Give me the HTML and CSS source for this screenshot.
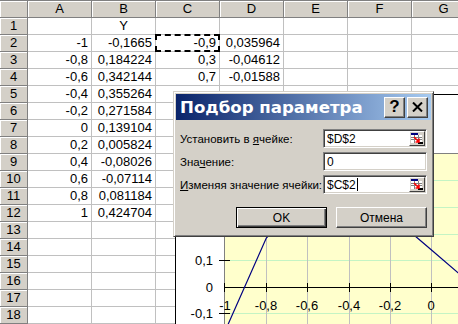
FILE: index.html
```html
<!DOCTYPE html>
<html lang="ru">
<head>
    <meta charset="UTF-8">
    <meta name="viewport" content="width=device-width, initial-scale=1.0">
    <title>Подбор параметра</title>
    <link rel="stylesheet" href="styles.css">
</head>
<body>
    <div class="sheet" id="sheet"></div>

    <svg class="chart" width="284" height="230" viewBox="0 0 284 230">
        <rect x="1.5" y="0.5" width="320" height="260" fill="#fff" stroke="#000"/>
        <rect x="50.5" y="59.5" width="260" height="200" fill="#ffffcc" stroke="#808080"/>
        <!-- gridlines -->
        <path d="M51 86.5H300M51 113.5H300M51 140.5H300M51 166.5H300M51 219.5H300" stroke="#c4f4c4"/>
        <path d="M92.5 60V230M133.5 60V230M175.5 60V230M216.5 60V230M257.5 60V230" stroke="#c0c0c0"/>
        <!-- axes -->
        <path d="M50.5 193.5H300" stroke="#000"/>
        <path d="M50.5 189V198M92.5 189V198M133.5 189V198M175.5 189V198M216.5 189V198M257.5 189V198" stroke="#000"/>
        <path d="M45 60.5H56M45 86.5H56M45 113.5H56M45 140.5H56M45 166.5H56M45 219.5H56" stroke="#000"/>
        <polyline fill="none" stroke="#000080" stroke-width="1.2"
            points="51,237.3 92.3,144 133.6,102 174.9,98.5 216.2,120.8 257.5,156 298.8,191.5"/>
        <text x="39" y="171" text-anchor="end">0,1</text>
        <text x="39" y="198" text-anchor="end">0</text>
        <text x="39" y="224" text-anchor="end">-0,1</text>
        <text x="51" y="216" text-anchor="middle">-1</text>
        <text x="92" y="216" text-anchor="middle">-0,8</text>
        <text x="133" y="216" text-anchor="middle">-0,6</text>
        <text x="175" y="216" text-anchor="middle">-0,4</text>
        <text x="216" y="216" text-anchor="middle">-0,2</text>
        <text x="257" y="216" text-anchor="middle">0</text>
    </svg>

    <div class="dialog">
        <div class="title-bar">
            <span class="title">Подбор параметра</span>
            <div class="title-buttons">
                <button class="tbtn">?</button>
                <button class="tbtn">
                    <svg width="11" height="10" viewBox="0 0 11 10">
                        <path d="M1 0.5L10 9.5M10 0.5L1 9.5" stroke="#000" stroke-width="2"/>
                    </svg>
                </button>
            </div>
        </div>
        <div class="dialog-body">
            <div class="fields">
                <label>Установить в <u>я</u>чейке:</label>
                <div class="field">
                    <span>$D$2</span>
                    <span class="ref-btn">
                        <svg width="14" height="13" viewBox="0 0 14 13">
                            <rect x="1" y="1" width="7" height="2" fill="#000080"/>
                            <rect x="1" y="3" width="11" height="8" fill="#fff"/>
                            <path d="M1 5.5H12M1 7.5H12M4.5 3V11M8.5 3V11" stroke="#808080"/>
                            <rect x="8" y="10" width="5" height="2" fill="#000"/>
                            <path d="M4 5L9 10M9 6.5V10H5.5" stroke="#f00" stroke-width="1.5" fill="none"/>
                        </svg>
                    </span>
                </div>
                <label>Зна<u>ч</u>ение:</label>
                <div class="field">
                    <span>0</span>
                </div>
                <label><u>И</u>зменяя значение ячейки:</label>
                <div class="field">
                    <span>$C$2</span><span class="caret"></span>
                    <span class="ref-btn">
                        <svg width="14" height="13" viewBox="0 0 14 13">
                            <rect x="1" y="1" width="7" height="2" fill="#000080"/>
                            <rect x="1" y="3" width="11" height="8" fill="#fff"/>
                            <path d="M1 5.5H12M1 7.5H12M4.5 3V11M8.5 3V11" stroke="#808080"/>
                            <rect x="8" y="10" width="5" height="2" fill="#000"/>
                            <path d="M4 5L9 10M9 6.5V10H5.5" stroke="#f00" stroke-width="1.5" fill="none"/>
                        </svg>
                    </span>
                </div>
            </div>
            <div class="buttons">
                <button class="btn default">OK</button>
                <button class="btn">Отмена</button>
            </div>
        </div>
    </div>

    <script>
        const sheet = document.getElementById("sheet");
        const cols = ["A", "B", "C", "D", "E", "F", "G"];
        const rows = [
            ["", "Y"],
            ["-1", "-0,1665", "-0,9", "0,035964"],
            ["-0,8", "0,184224", "0,3", "-0,04612"],
            ["-0,6", "0,342144", "0,7", "-0,01588"],
            ["-0,4", "0,355264"],
            ["-0,2", "0,271584"],
            ["0", "0,139104"],
            ["0,2", "0,005824"],
            ["0,4", "-0,08026"],
            ["0,6", "-0,07114"],
            ["0,8", "0,081184"],
            ["1", "0,424704"]
        ];

        function addCell(text, className) {
            const cell = document.createElement("div");
            cell.className = className;
            cell.textContent = text;
            sheet.appendChild(cell);
            return cell;
        }

        addCell("", "cell head col-head");
        cols.forEach(function(c) {
            addCell(c, "cell head col-head");
        });

        for (let r = 1; r <= 18; r++) {
            addCell(r, "cell head");
            const values = rows[r - 1] || [];
            cols.forEach(function(c, i) {
                const cell = addCell(values[i] || "", "cell");
                if (r === 1) cell.classList.add("center");
                if (r === 2 && c === "C") cell.classList.add("copied");
            });
        }
    </script>
</body>
</html>
```

FILE: styles.css
```css
body {
    margin: 0;
    width: 458px;
    height: 324px;
    overflow: hidden;
    position: relative;
    background-color: #fff;
    font-family: "Liberation Sans", Arial, sans-serif;
}

/* spreadsheet */
.sheet {
    display: grid;
    grid-template-columns: 28px repeat(7, 64px);
    grid-template-rows: 18px;
    grid-auto-rows: 17px;
    font-size: 13px;
}
.cell {
    box-sizing: border-box;
    border-right: 1px solid #c0c0c0;
    border-bottom: 1px solid #c0c0c0;
    padding: 0 3px;
    line-height: 16px;
    text-align: right;
    white-space: nowrap;
    overflow: hidden;
}
.cell.center {
    text-align: center;
}
.head {
    background-color: #d4d0c8;
    border-color: #808080;
    box-shadow: inset 1px 1px #fff;
    text-align: center;
    padding: 0;
}
.col-head {
    border-top: 1px solid #808080;
}
.copied {
    position: relative;
    overflow: visible;
}
.copied::after {
    content: "";
    position: absolute;
    left: -1px;
    top: -1px;
    right: -1px;
    bottom: -1px;
    border: 2px dashed #000;
}

/* chart object */
.chart {
    position: absolute;
    left: 174px;
    top: 94px;
}
.chart text {
    font-family: "Liberation Sans", Arial, sans-serif;
    font-size: 13px;
    fill: #000;
}

/* goal seek dialog */
.dialog {
    position: absolute;
    left: 173px;
    top: 91px;
    width: 261px;
    box-sizing: border-box;
    padding: 2px;
    background-color: #d4d0c8;
    border: 1px solid;
    border-color: #d4d0c8 #404040 #404040 #d4d0c8;
    box-shadow: inset 1px 1px #fff, inset -1px -1px #808080;
    font-size: 12px;
}
.title-bar {
    height: 26px;
    display: flex;
    align-items: center;
    justify-content: space-between;
    padding: 0 3px 0 4px;
    background: linear-gradient(to right, #0a246a, #a6caf0);
}
.title {
    color: #fff;
    font-family: "DejaVu Sans", sans-serif;
    font-weight: bold;
    font-size: 16.6px;
}
.title-buttons {
    display: flex;
    gap: 2px;
}
.tbtn {
    width: 21px;
    height: 21px;
    box-sizing: border-box;
    padding: 0;
    display: flex;
    align-items: center;
    justify-content: center;
    background-color: #d4d0c8;
    border: 1px solid;
    border-color: #fff #404040 #404040 #fff;
    box-shadow: inset -1px -1px #808080;
    font-family: "Liberation Sans", Arial, sans-serif;
    font-weight: bold;
    font-size: 17px;
    color: #000;
}
.dialog-body {
    padding: 9px 4px 6px 4px;
}
.fields {
    display: grid;
    grid-template-columns: 1fr 104px;
    grid-auto-rows: 19px;
    row-gap: 4px;
    align-items: center;
}
.fields label {
    font-size: 11.5px;
    white-space: nowrap;
}
.field {
    height: 19px;
    box-sizing: border-box;
    display: flex;
    align-items: center;
    padding: 1px 1px 1px 3px;
    background-color: #fff;
    border: 1px solid;
    border-color: #808080 #fff #fff #808080;
    box-shadow: inset 1px 1px #404040, inset -1px -1px #d4d0c8;
}
.caret {
    width: 1px;
    height: 13px;
    margin-left: 1px;
    background-color: #000;
}
.ref-btn {
    margin-left: auto;
    width: 16px;
    height: 15px;
    box-sizing: border-box;
    display: flex;
    align-items: center;
    justify-content: center;
    background-color: #d4d0c8;
    border: 1px solid;
    border-color: #fff #404040 #404040 #fff;
}
.buttons {
    display: flex;
    justify-content: flex-end;
    gap: 9px;
    margin-top: 13px;
}
.btn {
    width: 91px;
    height: 21px;
    box-sizing: border-box;
    padding: 0;
    background-color: #d4d0c8;
    border: 1px solid;
    border-color: #fff #404040 #404040 #fff;
    box-shadow: inset -1px -1px #808080;
    font-family: "Liberation Sans", Arial, sans-serif;
    font-size: 12px;
    color: #000;
}
.btn.default {
    border-color: #000;
    box-shadow: inset 1px 1px #fff, inset -1px -1px #404040, inset -2px -2px #808080;
}
```
